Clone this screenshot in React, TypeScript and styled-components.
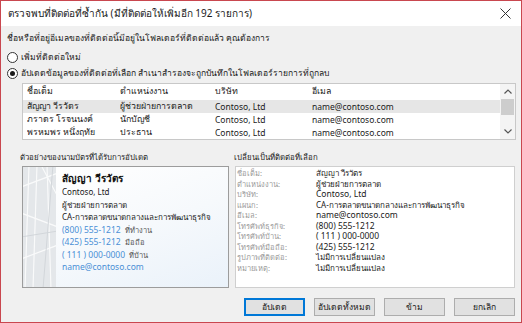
import React from 'react';
import styled, { createGlobalStyle } from 'styled-components';

const Global = createGlobalStyle`
  html, body { margin: 0; padding: 0; background: #ffffff; }
  body { font-family: "Noto Sans", "Liberation Sans", sans-serif; overflow: hidden; }
  * { box-sizing: border-box; }
`;

const Window = styled.div`
  width: 522px;
  height: 323px;
  border: 1px solid #c9474f;
  display: flex;
  flex-direction: column;
  background: #f0f0f0;
  overflow: hidden;
  color: #1a1a1a;
`;

const TitleBar = styled.div`
  height: 25px;
  flex: none;
  background: #ffffff;
  display: flex;
  align-items: center;
  justify-content: space-between;
  padding: 0 10px 0 7px;
  font-size: 10px;
  color: #1a1a1a;
`;

const Body = styled.div`
  flex: 1;
  display: flex;
  flex-direction: column;
  padding: 5px 5px 0 6px;
`;

const Intro = styled.div`
  height: 14px;
  line-height: 14px;
  font-size: 8.5px;
  white-space: nowrap;
`;

const RadioRow = styled.label<{ $first?: boolean }>`
  height: 16px;
  display: flex;
  align-items: center;
  gap: 3px;
  font-size: 8.5px;
  white-space: nowrap;
  margin-top: ${(p) => (p.$first ? '4px' : '0')};
`;

const RadioDot = styled.span<{ $on?: boolean }>`
  width: 11px;
  height: 11px;
  border-radius: 50%;
  border: 1px solid #333;
  background: #fff;
  display: flex;
  align-items: center;
  justify-content: center;
  flex: none;
  &::after {
    content: '';
    width: 5px;
    height: 5px;
    border-radius: 50%;
    background: ${(p) => (p.$on ? '#1a1a1a' : 'transparent')};
  }
`;

const ListBox = styled.div`
  margin: 2px 0 0 15px;
  height: 57px;
  border: 1px solid #c8c8c8;
  background: #ffffff;
  display: flex;
`;

const ListRows = styled.div`
  flex: 1;
  display: flex;
  flex-direction: column;
`;

const ListRow = styled.div<{ $head?: boolean; $sel?: boolean }>`
  height: ${(p) => (p.$head ? '16px' : '13px')};
  display: grid;
  grid-template-columns: 93px 95px 97px 1fr;
  align-items: center;
  padding-left: 4px;
  background: ${(p) => (p.$sel ? '#e6e6e6' : '#ffffff')};
  color: #1a1a1a;
  white-space: nowrap;
  margin-bottom: ${(p) => (p.$head ? '1px' : '0')};
`;

const Cell = styled.span<{ $latin?: boolean }>`
  font-size: ${(p) => (p.$latin ? '8.5px' : '8.8px')};
  line-height: 13px;
  overflow: hidden;
`;

const ScrollBar = styled.div`
  width: 15px;
  flex: none;
  display: flex;
  flex-direction: column;
  align-items: center;
  background: #f4f4f4;
`;

const ScrollArrow = styled.div`
  height: 15px;
  width: 15px;
  display: flex;
  align-items: center;
  justify-content: center;
`;

const ScrollThumb = styled.div`
  width: 13px;
  height: 16px;
  background: #cdcdcd;
`;

const ScrollTrack = styled.div`
  flex: 1;
`;

const Columns = styled.div`
  display: grid;
  grid-template-columns: 209px 281px;
  column-gap: 5px;
  margin: 10px 0 0 13px;
`;

const Column = styled.div`
  display: flex;
  flex-direction: column;
`;

const SectionLabel = styled.div`
  height: 14px;
  line-height: 14px;
  font-size: 7.8px;
  white-space: nowrap;
`;

const Card = styled.div`
  margin: 2px 0 0 2px;
  height: 122px;
  width: 207px;
  border: 1px solid #9c9c9c;
  display: flex;
  background: #ffffff;
`;

const CardStrip = styled.div`
  width: 33px;
  flex: none;
  background: #e4e7ea;
  overflow: hidden;
`;

const CardContent = styled.div`
  flex: 1;
  padding: 3px 0 0 6px;
  background: linear-gradient(160deg, #ffffff 0%, #f6f9fc 50%, #eaf2fa 100%);
  display: flex;
  flex-direction: column;
  overflow: hidden;
`;

const CardName = styled.div`
  height: 16px;
  line-height: 16px;
  font-size: 10px;
  font-weight: bold;
  color: #111;
  white-space: nowrap;
`;

const CardLine = styled.div<{ $blue?: boolean; $latin?: boolean }>`
  height: 12.5px;
  line-height: 12.5px;
  font-size: ${(p) => (p.$blue ? '8.5px' : p.$latin ? '8px' : '8px')};
  color: ${(p) => (p.$blue ? '#4a8fd6' : '#1a1a1a')};
  white-space: nowrap;
`;

const CardTag = styled.span`
  font-size: 7.5px;
  color: #555;
  margin-left: 4px;
`;

const Details = styled.div`
  margin: 2px 0 0 1px;
  height: 122px;
  border: 1px solid #cfcfcf;
  background: #ffffff;
  padding: 1px 0 0 1px;
  display: grid;
  grid-template-columns: 79px 1fr;
  grid-auto-rows: 10.5px;
  align-items: center;
`;

const DetailLabel = styled.span`
  font-size: 7.5px;
  color: #9a9a9a;
  white-space: nowrap;
  line-height: 10.5px;
`;

const DetailValue = styled.span<{ $latin?: boolean }>`
  font-size: ${(p) => (p.$latin ? '8.5px' : '8px')};
  color: #1a1a1a;
  white-space: nowrap;
  line-height: 10.5px;
`;

const ButtonRow = styled.div`
  display: flex;
  justify-content: flex-end;
  gap: 9px;
  margin-top: 10px;
  padding-right: 1px;
`;

const Button = styled.button<{ $default?: boolean }>`
  width: 61px;
  height: 18px;
  padding: 0;
  font-family: inherit;
  font-size: 8.5px;
  color: #1a1a1a;
  background: #e1e1e1;
  border: 1px solid ${(p) => (p.$default ? '#0078d7' : '#adadad')};
  box-shadow: ${(p) => (p.$default ? 'inset 0 0 0 1px #0078d7' : 'none')};
`;

const rows = [
  ['สัญญา วีรวัตร', 'ผู้ช่วยฝ่ายการตลาด', 'Contoso, Ltd', 'name@contoso.com'],
  ['ภราดร โรจนนงค์', 'นักบัญชี', 'Contoso, Ltd', 'name@contoso.com'],
  ['พรหมพร หนึ่งฤทัย', 'ประธาน', 'Contoso, Ltd', 'name@contoso.com'],
];

const details: [string, string, boolean][] = [
  ['ชื่อเต็ม:', 'สัญญา วีรวัตร', false],
  ['ตำแหน่งงาน:', 'ผู้ช่วยฝ่ายการตลาด', false],
  ['บริษัท:', 'Contoso, Ltd', true],
  ['แผนก:', 'CA-การตลาดขนาดกลางและการพัฒนาธุรกิจ', false],
  ['อีเมล:', 'name@contoso.com', true],
  ['โทรศัพท์ธุรกิจ:', '(800) 555-1212', true],
  ['โทรศัพท์บ้าน:', '( 111 ) 000-0000', true],
  ['โทรศัพท์มือถือ:', '(425) 555-1212', true],
  ['รูปภาพที่ติดต่อ:', 'ไม่มีการเปลี่ยนแปลง', false],
  ['หมายเหตุ:', 'ไม่มีการเปลี่ยนแปลง', false],
];

const CloseIcon = () => (
  <svg width="11" height="11" viewBox="0 0 11 11">
    <path d="M0.5 0.5 L10.5 10.5 M10.5 0.5 L0.5 10.5" stroke="#333" strokeWidth="1" fill="none" />
  </svg>
);

const Chevron = ({ up }: { up?: boolean }) => (
  <svg width="8" height="5" viewBox="0 0 8 5">
    <path d={up ? 'M0.5 4.5 L4 1 L7.5 4.5' : 'M0.5 0.5 L4 4 L7.5 0.5'} stroke="#555" strokeWidth="1.2" fill="none" />
  </svg>
);

const StripArt = () => (
  <svg width="33" height="120" viewBox="0 0 33 120">
    <g stroke="#ffffff" strokeWidth="1.2" opacity="0.8" fill="none">
      <path d="M6 -2 L2 122" />
      <path d="M14 -2 L10 122" />
      <path d="M24 -2 L28 122" />
      <path d="M-2 20 L35 6" />
      <path d="M-2 46 L35 60" />
      <path d="M-2 92 L35 78" />
      <path d="M18 -2 L35 30" />
    </g>
    <g stroke="#d2d6da" strokeWidth="1" fill="none">
      <path d="M30 -2 L20 122" />
      <path d="M-2 70 L35 64" />
    </g>
  </svg>
);

export default function App() {
  return (
    <>
      <Global />
      <Window>
        <TitleBar>
          <span>ตรวจพบที่ติดต่อที่ซ้ำกัน (มีที่ติดต่อให้เพิ่มอีก 192 รายการ)</span>
          <CloseIcon />
        </TitleBar>
        <Body>
          <Intro>ชื่อหรือที่อยู่อีเมลของที่ติดต่อนี้มีอยู่ในโฟลเดอร์ที่ติดต่อแล้ว คุณต้องการ</Intro>
          <RadioRow $first>
            <RadioDot />
            เพิ่มที่ติดต่อใหม่
          </RadioRow>
          <RadioRow>
            <RadioDot $on />
            อัปเดตข้อมูลของที่ติดต่อที่เลือก สำเนาสำรองจะถูกบันทึกในโฟลเดอร์รายการที่ถูกลบ
          </RadioRow>
          <ListBox>
            <ListRows>
              <ListRow $head>
                <Cell>ชื่อเต็ม</Cell>
                <Cell>ตำแหน่งงาน</Cell>
                <Cell>บริษัท</Cell>
                <Cell>อีเมล</Cell>
              </ListRow>
              {rows.map((r, i) => (
                <ListRow key={i} $sel={i === 0}>
                  <Cell>{r[0]}</Cell>
                  <Cell>{r[1]}</Cell>
                  <Cell $latin>{r[2]}</Cell>
                  <Cell $latin>{r[3]}</Cell>
                </ListRow>
              ))}
            </ListRows>
            <ScrollBar>
              <ScrollArrow>
                <Chevron up />
              </ScrollArrow>
              <ScrollThumb />
              <ScrollTrack />
              <ScrollArrow>
                <Chevron />
              </ScrollArrow>
            </ScrollBar>
          </ListBox>
          <Columns>
            <Column>
              <SectionLabel>ตัวอย่างของนามบัตรที่ได้รับการอัปเดต</SectionLabel>
              <Card>
                <CardStrip>
                  <StripArt />
                </CardStrip>
                <CardContent>
                  <CardName>สัญญา วีรวัตร</CardName>
                  <CardLine $latin>Contoso, Ltd</CardLine>
                  <CardLine>ผู้ช่วยฝ่ายการตลาด</CardLine>
                  <CardLine>CA-การตลาดขนาดกลางและการพัฒนาธุรกิจ</CardLine>
                  <CardLine $blue>
                    (800) 555-1212<CardTag>ที่ทำงาน</CardTag>
                  </CardLine>
                  <CardLine $blue>
                    (425) 555-1212<CardTag>มือถือ</CardTag>
                  </CardLine>
                  <CardLine $blue>
                    ( 111 ) 000-0000<CardTag>ที่บ้าน</CardTag>
                  </CardLine>
                  <CardLine $blue>name@contoso.com</CardLine>
                </CardContent>
              </Card>
            </Column>
            <Column>
              <SectionLabel>เปลี่ยนเป็นที่ติดต่อที่เลือก</SectionLabel>
              <Details>
                {details.map(([l, v, latin]) => (
                  <React.Fragment key={l}>
                    <DetailLabel>{l}</DetailLabel>
                    <DetailValue $latin={latin}>{v}</DetailValue>
                  </React.Fragment>
                ))}
              </Details>
            </Column>
          </Columns>
          <ButtonRow>
            <Button $default>อัปเดต</Button>
            <Button>อัปเดตทั้งหมด</Button>
            <Button>ข้าม</Button>
            <Button>ยกเลิก</Button>
          </ButtonRow>
        </Body>
      </Window>
    </>
  );
}
